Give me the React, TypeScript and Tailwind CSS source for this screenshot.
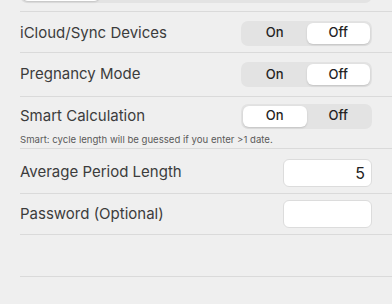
import React from 'react'

const font = { fontFamily: 'Inter, "Noto Sans", sans-serif' }

function Segmented({ on }: { on: boolean }) {
  return (
    <div className="flex h-[25px] w-[131px] rounded-[7px] bg-[#e3e3e3] p-[2px] text-[13px] font-medium text-[#222]">
      <div
        className={
          on
            ? 'flex flex-1 items-center justify-center rounded-[6px] bg-white shadow-[0_1px_2px_rgba(0,0,0,0.15)]'
            : 'flex flex-1 items-center justify-center'
        }
      >
        On
      </div>
      <div
        className={
          on
            ? 'flex flex-1 items-center justify-center'
            : 'flex flex-1 items-center justify-center rounded-[6px] bg-white shadow-[0_1px_2px_rgba(0,0,0,0.15)]'
        }
      >
        Off
      </div>
    </div>
  )
}

export default function App() {
  return (
    <div className="h-[304px] w-[392px] overflow-hidden bg-[#efefef] pl-5 text-[#3c3c3c]" style={font}>
      {/* partially visible control above */}
      <div className="-mt-[30px] flex h-[42px] items-center border-b border-[#dadada] pr-5">
        <div className="flex h-[25px] w-full rounded-[7px] bg-[#e3e3e3] p-[2px]">
          <div className="w-[78px] rounded-[6px] bg-white shadow-[0_1px_2px_rgba(0,0,0,0.15)]" />
        </div>
      </div>

      <div className="flex h-[41px] items-center justify-between border-b border-[#dadada] pr-5 pt-[2px]">
        <span className="text-[15px]">iCloud/Sync Devices</span>
        <Segmented on={false} />
      </div>

      <div className="flex h-[44px] items-center justify-between border-b border-[#dadada] pr-5">
        <span className="text-[15px]">Pregnancy Mode</span>
        <Segmented on={false} />
      </div>

      <div className="border-b border-[#dadada] pr-5">
        <div className="flex h-[38px] items-center justify-between">
          <span className="text-[15px]">Smart Calculation</span>
          <Segmented on={true} />
        </div>
        <div className="h-[13px] text-[9.6px] leading-[9px] text-[#5a5a5a]">
          Smart: cycle length will be guessed if you enter &gt;1 date.
        </div>
      </div>

      <div className="flex h-[45px] items-center justify-between border-b border-[#dadada] pr-5 pt-[3px]">
        <span className="text-[15px]">Average Period Length</span>
        <div className="flex h-[28px] w-[89px] items-center justify-end rounded-[6px] border border-[#dcdcdc] bg-white pr-[6px] text-[16px] text-[#222]">
          5
        </div>
      </div>

      <div className="flex h-[41px] items-center justify-between border-b border-[#dadada] pr-5">
        <span className="text-[15px]">Password (Optional)</span>
        <div className="h-[28px] w-[89px] rounded-[6px] border border-[#dcdcdc] bg-white" />
      </div>

      <div className="h-[42px] border-b border-[#dadada]" />
    </div>
  )
}
